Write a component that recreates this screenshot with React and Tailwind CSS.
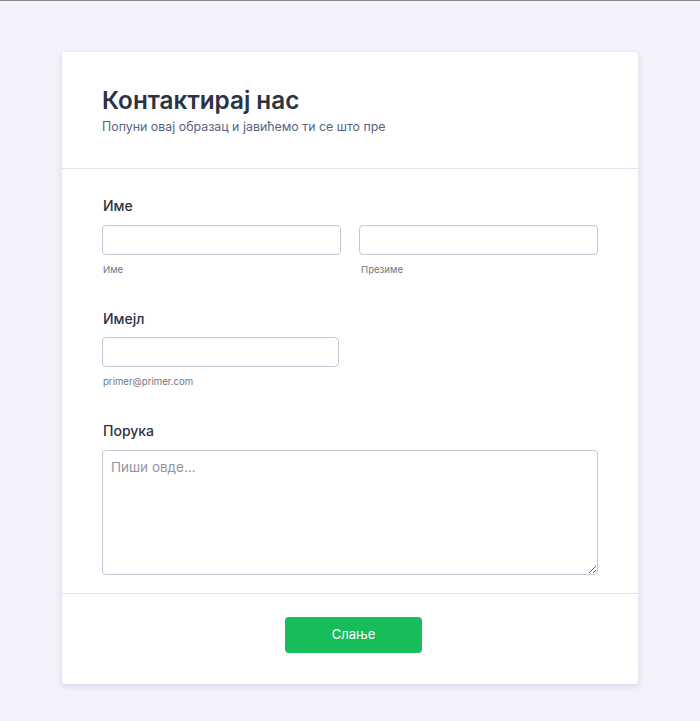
import React from 'react';

const font = { fontFamily: 'Inter, "Noto Sans", sans-serif' };

function Label({ children }) {
  return <div className="pl-px text-[14px] leading-5 font-medium text-[#2c3345]">{children}</div>;
}

function SubLabel({ children }) {
  return <div className="mt-[8px] pl-px text-[9.6px] leading-[14px] text-[#6f7686]">{children}</div>;
}

function TextInput({ className = '' }) {
  return (
    <input
      type="text"
      className={`block h-[30px] rounded-[4px] border border-[#c3c7d3] bg-white px-2 text-sm outline-none ${className}`}
    />
  );
}

export default function App() {
  return (
    <div className="min-h-[721px] border-t border-[#8a8a8a] bg-[#f3f3fe] pt-[51px] pb-9" style={font}>
      <div className="mx-auto w-[576px] rounded-[3px] bg-white shadow-[0_2px_6px_rgba(80,90,130,0.2)]">
        {/* Header */}
        <div className="border-b border-[#e3e5ee] px-10 pt-8 pb-8">
          <h1 className="text-[24.3px] leading-8 font-semibold text-[#2c3345]">Контактирај нас</h1>
          <p className="mt-[2px] text-[12.4px] leading-[18px] text-[#57647e]">
            Попуни овај образац и јавићемо ти се што пре
          </p>
        </div>

        {/* Fields */}
        <div className="border-b border-[#e3e5ee] px-10 pt-[27px] pb-[18px]">
          <Label>Име</Label>
          <div className="mt-[9px] grid grid-cols-2 gap-[18px]">
            <div>
              <TextInput className="w-full" />
              <SubLabel>Име</SubLabel>
            </div>
            <div>
              <TextInput className="w-full" />
              <div className="pl-px">
                <SubLabel>Презиме</SubLabel>
              </div>
            </div>
          </div>

          <div className="mt-[32px]">
            <Label>Имејл</Label>
            <TextInput className="mt-[8px] w-[237px]" />
            <SubLabel>primer@primer.com</SubLabel>
          </div>

          <div className="mt-[32px]">
            <Label>Порука</Label>
            <textarea
              placeholder="Пиши овде..."
              className="mt-[9px] block h-[125px] w-full resize-y rounded-[4px] border border-[#c3c7d3] bg-white px-[8px] py-[6px] text-[13.5px] text-[#2c3345] outline-none placeholder:text-[#8f96a3]"
            />
          </div>
        </div>

        {/* Footer */}
        <div className="flex justify-center pt-[23px] pb-[31px]">
          <button className="ml-[7px] h-9 w-[137px] rounded-[4px] bg-[#18bd5b] text-[13px] text-white">
            Слање
          </button>
        </div>
      </div>
    </div>
  );
}
